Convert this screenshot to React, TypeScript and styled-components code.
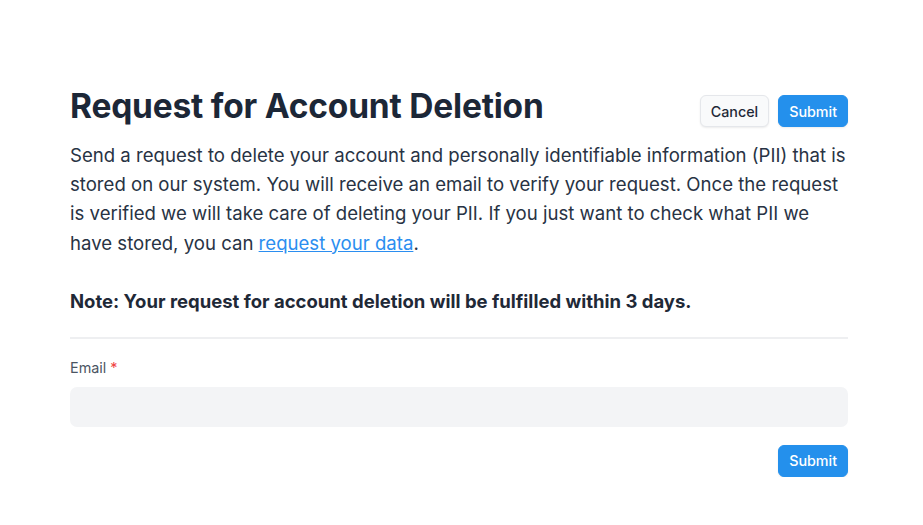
import React from "react";
import styled, { createGlobalStyle } from "styled-components";

const Global = createGlobalStyle`
  html, body { margin: 0; padding: 0; background: #ffffff; }
  body { font-family: Inter, "Noto Sans", sans-serif; color: #1f2a37; }
  * { box-sizing: border-box; }
`;

const Page = styled.div`
  padding: 86px 75px 0 70px;
`;

const Header = styled.div`
  display: flex;
  align-items: flex-start;
  justify-content: space-between;
`;

const Title = styled.h1`
  margin: 0;
  font-size: 33.5px;
  line-height: 40px;
  font-weight: 700;
  color: #1c2737;
  letter-spacing: -0.2px;
`;

const Actions = styled.div`
  display: flex;
  gap: 9px;
  margin-top: 9px;
`;

const Button = styled.button<{ $primary?: boolean }>`
  height: 32px;
  padding: 0 10px;
  border-radius: 6px;
  font-family: Inter, "Noto Sans", sans-serif;
  font-size: 14.3px;
  font-weight: 500;
  cursor: pointer;
  border: 1px solid ${(p) => (p.$primary ? "#2490ec" : "#e5e7eb")};
  background: ${(p) => (p.$primary ? "#2490ec" : "#f9fafb")};
  color: ${(p) => (p.$primary ? "#ffffff" : "#1f2937")};
  box-shadow: 0 1px 2px rgba(0, 0, 0, 0.08);
`;

const Description = styled.p`
  margin: 14px 0 0;
  font-size: 18.6px;
  line-height: 29.2px;
  color: #283344;
`;

const Link = styled.a`
  color: #2b8ef0;
  text-decoration: underline;
`;

const Note = styled.p`
  margin: 30px 0 0;
  font-size: 18.5px;
  line-height: 26px;
  font-weight: 700;
  color: #1f2937;
`;

const Divider = styled.hr`
  margin: 23px 0 0;
  border: 0;
  border-top: 2px solid #eeeff1;
`;

const Field = styled.div`
  display: flex;
  flex-direction: column;
  gap: 10px;
  margin-top: 20px;
`;

const Label = styled.label`
  font-size: 14.4px;
  line-height: 18px;
  color: #4b5563;
`;

const Required = styled.span`
  color: #ef4444;
  margin-left: 4px;
`;

const Input = styled.input`
  height: 40px;
  border: 0;
  border-radius: 7px;
  background: #f3f4f6;
  padding: 0 12px;
  font-family: Inter, "Noto Sans", sans-serif;
  font-size: 15px;
  outline: none;
`;

const Footer = styled.div`
  display: flex;
  justify-content: flex-end;
  margin-top: 18px;
`;

export default function App() {
  return (
    <>
      <Global />
      <Page>
        <Header>
          <Title>Request for Account Deletion</Title>
          <Actions>
            <Button>Cancel</Button>
            <Button $primary>Submit</Button>
          </Actions>
        </Header>
        <Description>
          Send a request to delete your account and personally identifiable
          information (PII) that is stored on our system. You will receive an
          email to verify your request. Once the request is verified we will
          take care of deleting your PII. If you just want to check what PII we
          have stored, you can <Link href="#">request your data</Link>.
        </Description>
        <Note>Note: Your request for account deletion will be fulfilled within 3 days.</Note>
        <Divider />
        <Field>
          <Label>
            Email<Required>*</Required>
          </Label>
          <Input />
        </Field>
        <Footer>
          <Button $primary>Submit</Button>
        </Footer>
      </Page>
    </>
  );
}
